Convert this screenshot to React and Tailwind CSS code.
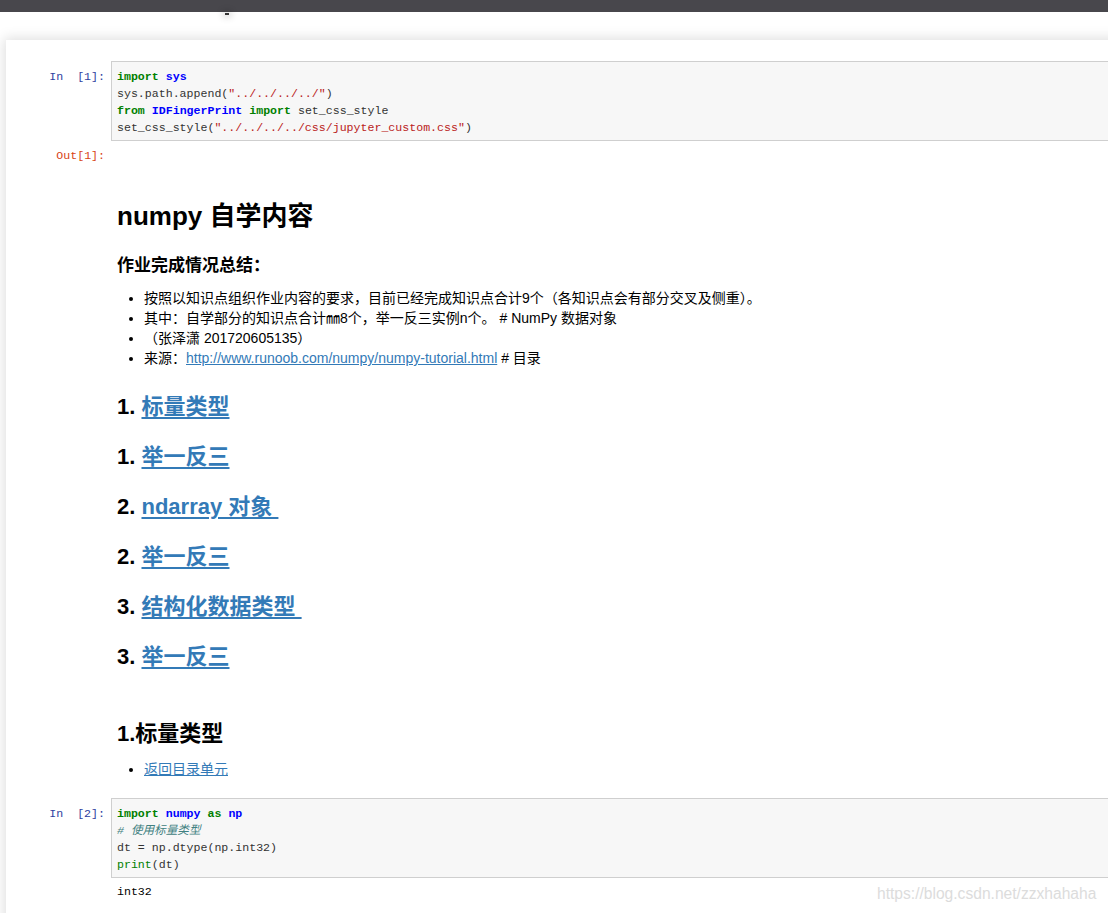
import React from "react";

const mono = { fontFamily: '"Liberation Mono", "Noto Sans CJK SC", monospace' };

const K = ({ children }) => <span className="font-bold text-[#008000]">{children}</span>;
const N = ({ children }) => <span className="font-bold text-[#0000ff]">{children}</span>;
const S = ({ children }) => <span className="text-[#ba2121]">{children}</span>;

function Prompt({ label, color = "text-[#303f9f]" }) {
  return (
    <div
      className={`w-[105px] shrink-0 pr-[6px] text-right text-[11.6px] leading-[17px] ${color}`}
      style={mono}
    >
      {label}
    </div>
  );
}

function CodeCell({ n, lines }) {
  return (
    <div className="flex">
      <div className="pt-[7px]">
        <Prompt label={<>In&nbsp;&nbsp;[{n}]:</>} />
      </div>
      <div className="flex-1 border border-[#cfcfcf] bg-[#f7f7f7] pl-[5px] pt-[6px] pb-[4px]">
        <div className="text-[11.6px] leading-[17px] text-[#333] whitespace-pre" style={mono}>
          {lines.map((l, i) => (
            <div key={i}>{l}</div>
          ))}
        </div>
      </div>
    </div>
  );
}

function LinkHeading({ num, text }) {
  return (
    <div className="mt-[20px] text-[22px] font-bold leading-[30px] text-black">
      {num}{" "}
      <span className="text-[#337ab7] underline decoration-2 underline-offset-[3px]">{text}</span>
    </div>
  );
}

export default function App() {
  const sans = { fontFamily: '"Liberation Sans", "Noto Sans CJK SC", sans-serif' };
  return (
    <div className="relative h-[913px] w-[1108px] overflow-hidden bg-white" style={sans}>
      <div className="h-[12px] bg-[#48474c]" />
      <div className="relative h-[28px]">
        <div className="absolute left-[225px] top-[1px] h-[2px] w-[4px] bg-[#333] shadow-[0_0_6px_3px_rgba(0,0,0,0.12)]" />
      </div>
      <div className="ml-[6px] w-[1130px] bg-white pt-[21px] shadow-[0_0_12px_2px_rgba(0,0,0,0.13)]">
        <CodeCell
          n={1}
          lines={[
            <><K>import</K> <N>sys</N></>,
            <>sys.path.append(<S>"../../../../"</S>)</>,
            <><K>from</K> <N>IDFingerPrint</N> <K>import</K> set_css_style</>,
            <>set_css_style(<S>"../../../../css/jupyter_custom.css"</S>)</>,
          ]}
        />
        <div className="flex pt-[6px]">
          <Prompt label="Out[1]:" color="text-[#d84315]" />
          <div className="flex-1 pl-[6px] pt-[54px] text-black">
            <div className="text-[26px] font-bold leading-[30px]">numpy 自学内容</div>
            <div className="mt-[24px] text-[17px] font-bold leading-[22px]">作业完成情况总结：</div>
            <ul className="mt-[11px] list-disc pl-[27px] text-[14px] leading-[20px]">
              <li>按照以知识点组织作业内容的要求，目前已经完成知识点合计9个（各知识点会有部分交叉及侧重）。</li>
              <li>其中：自学部分的知识点合计㎜8个，举一反三实例n个。 # NumPy 数据对象</li>
              <li>（张泽潇 201720605135）</li>
              <li>
                来源：
                <span className="text-[#337ab7] underline">http://www.runoob.com/numpy/numpy-tutorial.html</span>{" "}
                # 目录
              </li>
            </ul>
            <div className="mt-[4px] flex flex-col">
              <LinkHeading num="1." text="标量类型" />
              <LinkHeading num="1." text="举一反三" />
              <LinkHeading num="2." text={"ndarray 对象\u00a0"} />
              <LinkHeading num="2." text="举一反三" />
              <LinkHeading num="3." text={"结构化数据类型\u00a0"} />
              <LinkHeading num="3." text="举一反三" />
            </div>
            <div className="mt-[47px] text-[22px] font-bold leading-[30px]">1.标量类型</div>
            <ul className="mt-[10px] list-disc pl-[27px] text-[14px] leading-[20px]">
              <li>
                <span className="text-[#337ab7] underline">返回目录单元</span>
              </li>
            </ul>
          </div>
        </div>
        <div className="mt-[19px]">
          <CodeCell
            n={2}
            lines={[
              <><K>import</K> <N>numpy</N> <K>as</K> <N>np</N></>,
              <span className="italic text-[#408080]"># 使用标量类型</span>,
              <>dt = np.dtype(np.int32)</>,
              <><span className="text-[#008000]">print</span>(dt)</>,
            ]}
          />
        </div>
        <div className="flex pt-[5px]">
          <div className="w-[105px] shrink-0" />
          <div className="pl-[6px] text-[11.6px] leading-[17px] text-black" style={mono}>
            int32
          </div>
        </div>
        <div className="h-[40px]" />
      </div>
      <div className="absolute left-[877px] top-[884px] text-[15.6px] leading-[20px] text-[#dcdcdc]" style={sans}>
        https://blog.csdn.net/zzxhahaha
      </div>
    </div>
  );
}
